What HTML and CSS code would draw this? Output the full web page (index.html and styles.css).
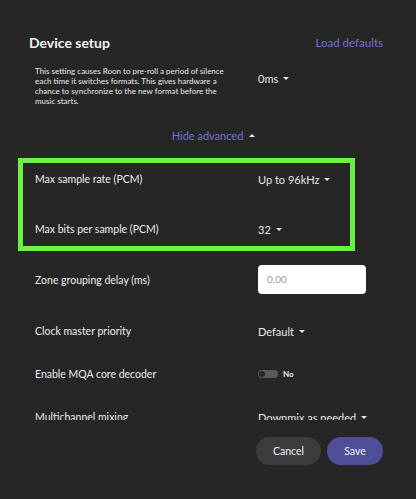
FILE: index.html
```html
<!DOCTYPE html>
<html>
<head>
<meta charset="utf-8">
<link rel="stylesheet" href="styles.css">
</head>
<body>
<div class="dialog">
  <div class="header">
    <h1 class="title">Device setup</h1>
    <span class="link">Load defaults</span>
  </div>
  <div class="scroll">
    <div class="row row-desc">
      <p class="desc">This setting causes Roon to pre-roll a period of silence each time it switches formats. This gives hardware a chance to synchronize to the new format before the music starts.</p>
      <span class="value">0ms <span class="caret"></span></span>
    </div>
    <div class="advanced"><span class="link">Hide advanced</span><span class="caret caret-up"></span></div>
    <div class="highlight">
      <div class="row row-in">
        <span class="label">Max sample rate (PCM)</span>
        <span class="value">Up to 96kHz <span class="caret"></span></span>
      </div>
      <div class="row row-in">
        <span class="label">Max bits per sample (PCM)</span>
        <span class="value">32 <span class="caret"></span></span>
      </div>
    </div>
    <div class="row row-zone">
      <span class="label">Zone grouping delay (ms)</span>
      <div class="input">0.00</div>
    </div>
    <div class="row row-clock">
      <span class="label">Clock master priority</span>
      <span class="value">Default <span class="caret"></span></span>
    </div>
    <div class="row row-mqa">
      <span class="label">Enable MQA core decoder</span>
      <span class="toggle-wrap"><span class="toggle"><span class="knob"></span></span><span class="toggle-text">No</span></span>
    </div>
    <div class="row row-multi">
      <span class="label">Multichannel mixing</span>
      <span class="value">Downmix as needed <span class="caret"></span></span>
    </div>
  </div>
  <div class="footer">
    <button class="btn btn-cancel">Cancel</button>
    <button class="btn btn-save">Save</button>
  </div>
</div>
</body>
</html>
```

FILE: styles.css
```css
html, body {
  margin: 0;
  padding: 0;
  background: #262626;
}
body {
  font-family: Lato, "Noto Sans", sans-serif;
  color: #ececec;
  width: 416px;
  height: 499px;
  overflow: hidden;
}
.dialog {
  display: flex;
  flex-direction: column;
}
.header {
  display: flex;
  justify-content: space-between;
  align-items: center;
  height: 24px;
  margin-top: 30px;
  padding: 0 33px 0 29px;
}
.title {
  margin: 0;
  font-size: 14px;
  font-weight: 700;
  color: #f2f2f2;
}
.link {
  color: #7272dc;
  font-size: 11.5px;
}
.scroll {
  height: 360px;
  margin-top: 6px;
  overflow: hidden;
  display: flex;
  flex-direction: column;
}
.scroll > * {
  flex: none;
}
.row {
  display: grid;
  grid-template-columns: 223px 1fr;
  align-items: center;
  padding-left: 35px;
  font-size: 10.5px;
}
.row-desc {
  margin-top: 6px;
  align-items: start;
}
.desc {
  margin: 0;
  font-size: 8px;
  line-height: 10px;
  width: 201px;
  color: #e8e8e8;
}
.row-desc .value {
  padding-top: 6px;
}
.value {
  display: flex;
  align-items: center;
  gap: 5px;
  font-size: 11px;
  color: #e6e6e6;
  white-space: nowrap;
}
.caret {
  display: inline-block;
  width: 0;
  height: 0;
  border-left: 3px solid transparent;
  border-right: 3px solid transparent;
  border-top: 3.5px solid #e6e6e6;
}
.caret-up {
  border-top: none;
  border-bottom: 3.5px solid #e6e6e6;
}
.advanced {
  display: flex;
  justify-content: center;
  align-items: center;
  gap: 6px;
  height: 20px;
  margin-top: 19px;
  padding-left: 11px;
}
.advanced .link {
  font-size: 11px;
}
.highlight {
  margin: 13px 0 0 18px;
  width: 337px;
  height: 93px;
  box-sizing: border-box;
  border: 5px solid #6cf043;
  display: flex;
  flex-direction: column;
  gap: 18px;
}
.row-in {
  height: 32px;
  padding-left: 12px;
}
.row-zone {
  margin-top: 14px;
  height: 29px;
}
.input {
  width: 108px;
  height: 29px;
  box-sizing: border-box;
  background: #fff;
  border-radius: 4px;
  color: #9a9a9a;
  font-size: 10px;
  line-height: 29px;
  padding-left: 9px;
}
.row-clock {
  margin-top: 27px;
  height: 20px;
}
.row-mqa {
  margin-top: 23px;
  height: 20px;
}
.toggle-wrap {
  display: flex;
  align-items: center;
  gap: 5px;
}
.toggle {
  width: 20px;
  height: 8px;
  border-radius: 4px;
  background: #5a5a5a;
  display: flex;
  align-items: center;
  padding-left: 1px;
  box-sizing: border-box;
}
.knob {
  width: 6px;
  height: 6px;
  border-radius: 50%;
  background: #262626;
}
.toggle-text {
  font-size: 8px;
  font-weight: 700;
  color: #eee;
}
.row-multi {
  margin-top: 23px;
  height: 20px;
}
.footer {
  display: flex;
  justify-content: flex-end;
  gap: 6px;
  padding-right: 33px;
  margin-top: 17px;
}
.btn {
  height: 28px;
  border: none;
  border-radius: 14px;
  font-family: Lato, "Noto Sans", sans-serif;
  font-size: 10.5px;
  color: #f0f0f0;
  padding: 0;
}
.btn-cancel {
  width: 65px;
  background: #3c3c3e;
}
.btn-save {
  width: 56px;
  background: #4f4f98;
}
```
